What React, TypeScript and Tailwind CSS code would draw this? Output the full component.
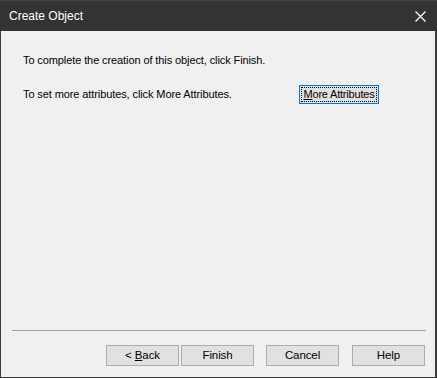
import React from 'react';

const font = { fontFamily: '"Liberation Sans", Arial, sans-serif' };

function DialogButton({ children, className = '' }: { children: React.ReactNode; className?: string }) {
  return (
    <button className={`w-[73px] h-[21px] bg-[#e1e1e1] border border-[#adadad] text-[11.5px] text-black leading-none flex items-center justify-center whitespace-pre ${className}`}>
      <span>{children}</span>
    </button>
  );
}

export default function App() {
  return (
    <div className="w-[437px] h-[378px] flex flex-col bg-[#f0f0f0] border-l border-r-2 border-b border-[#3b3b3b] text-[11px] tracking-[-0.1px] text-black" style={font}>
      {/* title bar */}
      <div className="h-[31px] -ml-px -mr-[2px] bg-[#333333] border-t border-[#424242] flex items-center justify-between pl-[9px] pr-[10px]">
        <span className="text-white text-[12px] tracking-normal">Create Object</span>
        <svg width="11" height="11" viewBox="0 0 11 11" className="mr-[1px]">
          <path d="M0.5 0.5 L10.5 10.5 M10.5 0.5 L0.5 10.5" stroke="#ffffff" strokeWidth="1.2" />
        </svg>
      </div>

      {/* body */}
      <div className="flex-1 flex flex-col pl-[22px] pt-[21px]">
        <p className="leading-[16px]">To complete the creation of this object, click Finish.</p>
        <div className="flex items-start mt-[18px]">
          <p className="w-[276px] leading-[16px]">To set more attributes, click More Attributes.</p>
          <button className="w-[80px] h-[19px] -mt-px bg-[#e1e1e1] border border-[#0078d7] p-px">
            <span className="w-full h-full flex items-center justify-center outline-1 outline-dotted outline-black -outline-offset-1 text-[11px] tracking-[-0.2px] leading-none whitespace-nowrap">
              <span>
                <u>M</u>ore Attributes
              </span>
            </span>
          </button>
        </div>
      </div>

      {/* footer */}
      <div className="pl-[11px] pr-[9px]">
        <div className="h-px bg-[#a0a0a0]" />
      </div>
      <div className="flex pt-[14px] pb-[11px] pl-[105px]">
        <DialogButton>
          {'< '}
          <u>B</u>ack
        </DialogButton>
        <DialogButton className="ml-[2px]">Finish</DialogButton>
        <DialogButton className="ml-[12px]">Cancel</DialogButton>
        <DialogButton className="ml-[13px]">Help</DialogButton>
      </div>
    </div>
  );
}
